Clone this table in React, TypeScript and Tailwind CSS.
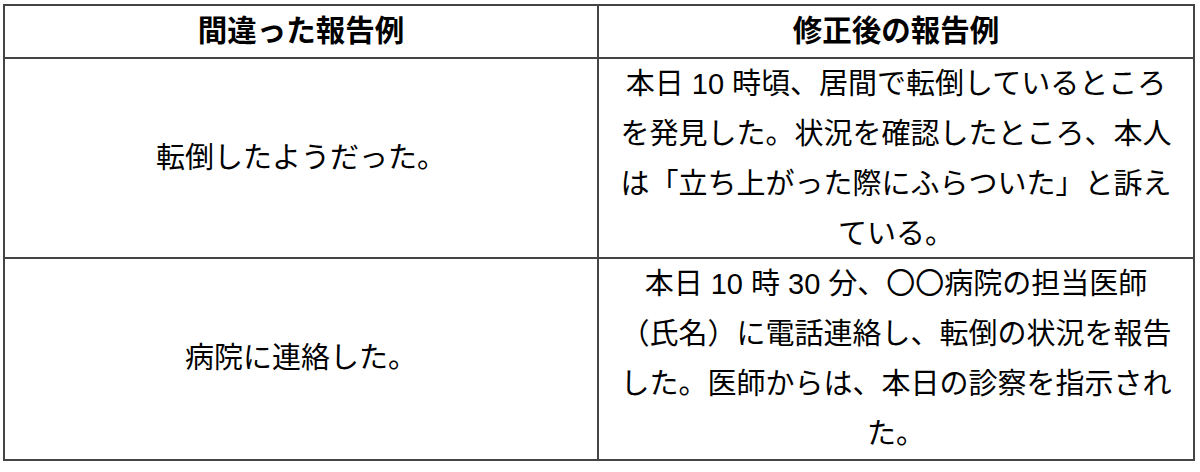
import React from "react";

const font = { fontFamily: '"Liberation Sans", "Noto Sans CJK JP", sans-serif' };

export default function App() {
  return (
    <div className="w-[1200px] h-[472px] bg-white text-black" style={font}>
      <div className="ml-[3px] pt-[4px]">
        <div className="w-[1192px] border-2 border-[#444]">
          <div className="grid grid-cols-[594px_1fr] h-[53px] border-b-2 border-[#444]">
            <div className="border-r-2 border-[#444] flex items-center justify-center text-[29.5px] font-bold">
              間違った報告例
            </div>
            <div className="flex items-center justify-center text-[29.5px] font-bold">
              修正後の報告例
            </div>
          </div>
          <div className="grid grid-cols-[594px_1fr] h-[200px] border-b-2 border-[#444]">
            <div className="border-r-2 border-[#444] flex items-center justify-center text-[29px]">
              転倒したようだった。
            </div>
            <div className="flex flex-col items-center justify-center text-[29px] leading-[50px] whitespace-nowrap">
              <div>本日 10 時頃、居間で転倒しているところ</div>
              <div>を発見した。状況を確認したところ、本人</div>
              <div>は「立ち上がった際にふらついた」と訴え</div>
              <div>ている。</div>
            </div>
          </div>
          <div className="grid grid-cols-[594px_1fr] h-[200px]">
            <div className="border-r-2 border-[#444] flex items-center justify-center text-[29px]">
              病院に連絡した。
            </div>
            <div className="flex flex-col items-center justify-center text-[29px] leading-[50px] whitespace-nowrap">
              <div>本日 10 時 30 分、〇〇病院の担当医師</div>
              <div>（氏名）に電話連絡し、転倒の状況を報告</div>
              <div>した。医師からは、本日の診察を指示され</div>
              <div>た。</div>
            </div>
          </div>
        </div>
      </div>
    </div>
  );
}
